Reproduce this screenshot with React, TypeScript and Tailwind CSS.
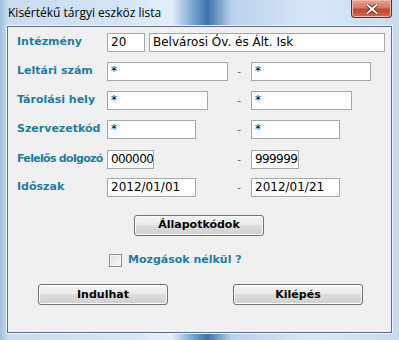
import React from "react"

const label =
  "w-[90px] shrink-0 whitespace-nowrap text-[11px] font-bold text-[#1f7d9e] [font-family:'DejaVu_Sans',sans-serif]"
const input =
  "h-[19px] shrink-0 overflow-hidden whitespace-nowrap border border-[#a3a9b1] bg-white px-[3px] text-[12px] leading-[17px] text-black [font-family:'DejaVu_Sans',sans-serif]"
const btn =
  "h-[21px] rounded-[3px] border border-[#707070] bg-[linear-gradient(180deg,#f4f4f4_0%,#ebebeb_45%,#dddddd_50%,#cfcfcf_100%)] text-[11px] font-bold text-black shadow-[inset_0_0_0_1px_#fcfcfc] [font-family:'DejaVu_Sans',sans-serif]"

function Row({ name, a, aw, b, bw, tight }: { name: string; a: string; aw: number; b: string; bw: number; tight?: boolean }) {
  // tight: campos estrechos, se aprieta el texto para que quepa
  const extra = tight ? " px-[2px] tracking-[-0.6px]" : ""
  return (
    <div className="flex h-[19px] items-center">
      <div className={label + (tight ? " tracking-[-0.7px]" : "")}>{name}</div>
      <div className="w-[120px] shrink-0">
        <div className={input + extra} style={{ width: aw }}>
          {a}
        </div>
      </div>
      <div className="w-[24px] shrink-0 text-center text-[11px] text-[#1f7d9e]">-</div>
      <div className={input + extra} style={{ width: bw }}>
        {b}
      </div>
    </div>
  )
}

export default function App() {
  return (
    <div className="relative h-[340px] w-[399px] overflow-hidden bg-[linear-gradient(90deg,#9fbfe0_0%,#c9dcf0_2%,#d3e4f5_30%,#e4eff9_43%,#6d9bcb_49%,#3d72ab_52%,#b9d2ec_58%,#d8e7f6_78%,#c7dbf0_100%)]">
      {/* barra de titulo */}
      <div className="flex h-[26px] items-start">
        <div className="pl-[8px] pt-[5px] text-[12px] leading-[16px] text-black [font-family:'Open_Sans',sans-serif]">
          Kisértékű tárgyi eszköz lista
        </div>
      </div>
      <div className="absolute right-[7px] top-0 flex h-[18px] w-[41px] items-center justify-center rounded-b-[4px] border border-t-0 border-[#6e2a22] bg-[linear-gradient(180deg,#e8a493_0%,#d67a66_45%,#c4462f_55%,#d0684e_100%)] shadow-[inset_0_0_0_1px_#eebbae]">
        <svg width="12" height="10" viewBox="0 0 12 10">
          <path d="M1.5 1 L10.5 9 M10.5 1 L1.5 9" stroke="#5a1f17" strokeWidth="3.6" strokeLinecap="square" />
          <path d="M1.5 1 L10.5 9 M10.5 1 L1.5 9" stroke="#ffffff" strokeWidth="2" strokeLinecap="square" />
        </svg>
      </div>

      {/* area cliente */}
      <div className="mx-[7px] h-[307px] border border-[#5f7187] bg-[#f0f0f0] shadow-[0_0_0_1px_#e9f1fa]">
        <div className="flex flex-col pl-[9px] pt-[6px]">
          <div className="flex h-[19px] items-center">
            <div className={label}>Intézmény</div>
            <div className={input + " w-[38px]"}>20</div>
            <div className={input + " ml-[4px] w-[236px]"}>Belvárosi Óv. és Ált. Isk</div>
          </div>
          <div className="mt-[10px]">
            <Row name="Leltári szám" a="*" aw={121} b="*" bw={120} />
          </div>
          <div className="mt-[10px]">
            <Row name="Tárolási hely" a="*" aw={101} b="*" bw={101} />
          </div>
          <div className="mt-[10px]">
            <Row name="Szervezetkód" a="*" aw={89} b="*" bw={89} />
          </div>
          <div className="mt-[11px]">
            <Row name="Felelős dolgozó" a="000000" aw={47} b="999999" bw={48} tight />
          </div>
          <div className="mt-[9px]">
            <Row name="Időszak" a="2012/01/01" aw={89} b="2012/01/21" bw={89} />
          </div>
          <div className="mt-[13px] pl-[117px]">
            <button className={btn + " w-[130px]"}>Állapotkódok</button>
          </div>
          <div className="mt-[16px] flex items-center pl-[92px]">
            <div className="h-[13px] w-[13px] border border-[#8f8f8f] bg-[linear-gradient(135deg,#dcdcdc,#fbfbfb)] shadow-[inset_0_0_0_1px_#f4f4f4]" />
            <div className="ml-[6px] text-[11px] font-bold text-[#1f7d9e] [font-family:'DejaVu_Sans',sans-serif]">
              Mozgások nélkül ?
            </div>
          </div>
          <div className="mt-[16px] flex pl-[21px]">
            <button className={btn + " w-[130px]"}>Indulhat</button>
            <button className={btn + " ml-[65px] w-[130px]"}>Kilépés</button>
          </div>
        </div>
      </div>
    </div>
  )
}
